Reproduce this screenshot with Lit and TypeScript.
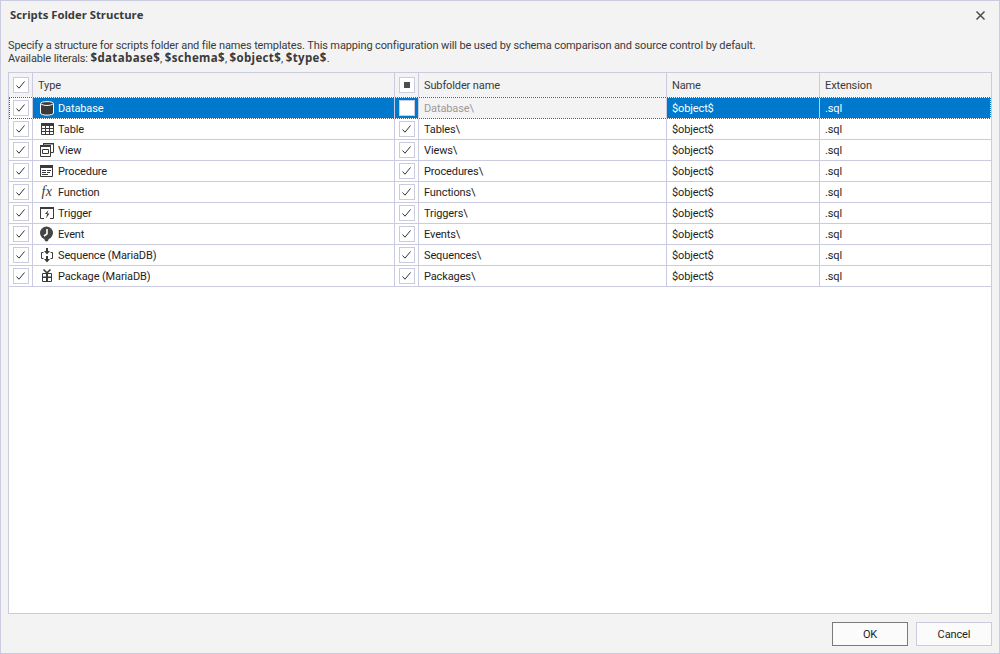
import { LitElement, css, html, svg } from "lit";

const icons: Record<string, unknown> = {
  database: svg`
    <path d="M1.5 3.5C1.5 1 14.5 1 14.5 3.5V13C14.5 15.8 1.5 15.8 1.5 13Z" fill="#3a3a3a" stroke="#fff" stroke-width="1"/>
    <path d="M2 3.8C3.8 6 12.2 6 14 3.8" fill="none" stroke="#fff" stroke-width="1"/>`,
  table: svg`
    <path d="M2.5 2.5h12v11h-12z" fill="#fff" stroke="#3a3a3a"/>
    <path d="M2 2h13v3H2z" fill="#3a3a3a"/>
    <path d="M6.5 5v9M10.5 5v9M3 7.5h12M3 10.5h12" stroke="#3a3a3a" fill="none"/>`,
  view: svg`
    <path d="M4.5 1.5h10v9h-10z" fill="#fff" stroke="#3a3a3a"/>
    <path d="M1.5 3.5h10v11h-10z" fill="#fff" stroke="#3a3a3a"/>
    <path d="M4 1h11v1.5H4zM1 3h11v2H1z" fill="#3a3a3a"/>
    <path d="M3.5 7.5h6v4h-6z" fill="none" stroke="#3a3a3a"/>`,
  procedure: svg`
    <path d="M1.5 2.5h12v11h-12z" fill="#fff" stroke="#3a3a3a"/>
    <path d="M1 2h13v3H1z" fill="#3a3a3a"/>
    <path d="M3 7.5h4M8 7.5h4M3 9.5h4M8 9.5h3M3 11.5h6" stroke="#3a3a3a" fill="none"/>`,
  trigger: svg`
    <path d="M1.5 2.5h13v11h-13z" fill="#fff" stroke="#3a3a3a"/>
    <path d="M1 2h14v2H1z" fill="#3a3a3a"/>
    <path d="M5 13h6v2H5z" fill="#fff"/>
    <path d="M9.5 5 6 9h2.2L7 13.5l3.5-5H8.3Z" fill="#3a3a3a"/>`,
  event: svg`
    <circle cx="7.5" cy="7" r="6.5" fill="#454545"/>
    <path d="M8 3v4.8L5 10" fill="none" stroke="#fff" stroke-width="1.6"/>
    <circle cx="7.5" cy="13.5" r="2" fill="#454545"/>`,
  sequence: svg`
    <path d="M4.5 5.5H2.5v6h2M11.5 5.5h2v6h-2" fill="none" stroke="#3a3a3a"/>
    <path d="M7 1h2v3h2L8 7.5 5 4h2ZM7 9h2v3h2l-3 3.5L5 12h2Z" fill="#3a3a3a"/>`,
  package: svg`
    <path d="M3.5 5.5h9v8h-9z" fill="#fff" stroke="#3a3a3a" stroke-width="1"/>
    <path d="M3 8.5h10v1.5H3zM7 5h2v9H7z" fill="#3a3a3a"/>
    <path d="M4.5 1.5 8 4.8l3.5-3.3" fill="none" stroke="#3a3a3a" stroke-width="1.6"/>`,
};

const rows = [
  { type: "Database", icon: "database", folder: "Database\\" },
  { type: "Table", icon: "table", folder: "Tables\\" },
  { type: "View", icon: "view", folder: "Views\\" },
  { type: "Procedure", icon: "procedure", folder: "Procedures\\" },
  { type: "Function", icon: "fx", folder: "Functions\\" },
  { type: "Trigger", icon: "trigger", folder: "Triggers\\" },
  { type: "Event", icon: "event", folder: "Events\\" },
  { type: "Sequence (MariaDB)", icon: "sequence", folder: "Sequences\\" },
  { type: "Package (MariaDB)", icon: "package", folder: "Packages\\" },
];

class AppRoot extends LitElement {
  static styles = css`
    :host {
      display: block;
      width: 1000px;
      height: 654px;
      font-family: Roboto, "Noto Sans", sans-serif;
      font-size: 11px;
      letter-spacing: -0.12px;
      color: #1e1e1e;
    }

    .dialog {
      box-sizing: border-box;
      width: 1000px;
      height: 654px;
      border: 1px solid #cbcbdf;
      background: #f3f3f3;
      display: flex;
      flex-direction: column;
    }

    .titlebar {
      height: 28px;
      flex: none;
      display: flex;
      align-items: center;
      justify-content: space-between;
      padding: 0 13px 0 9px;
    }

    .title {
      font-family: "Open Sans", sans-serif;
      font-weight: 700;
      font-size: 11.3px;
      letter-spacing: 0;
      color: #3a3a3a;
      margin-top: -2px;
    }

    .close {
      width: 11px;
      height: 11px;
      display: block;
    }

    .desc {
      height: 43px;
      flex: none;
      box-sizing: border-box;
      padding: 10px 0 0 7px;
      line-height: 13px;
      color: #3a3a3a;
    }

    .desc b {
      font-family: "Open Sans", sans-serif;
      font-weight: 700;
      font-size: 11.5px;
      line-height: 1;
      letter-spacing: 0.35px;
    }

    .grid {
      flex: 1;
      margin: 0 7px;
      box-sizing: border-box;
      border: 1px solid #cbcbdf;
      background: #fff;
      min-height: 0;
    }

    .row {
      display: grid;
      grid-template-columns: 24px 362px 24px 248px 153px 171px;
      height: 21px;
      box-sizing: border-box;
      border-bottom: 1px solid #cbcbdf;
      position: relative;
    }

    .row.head {
      height: 25px;
      background: #f3f3f3;
      color: #3a3a3a;
    }

    .cell {
      display: flex;
      align-items: center;
      box-sizing: border-box;
      border-right: 1px solid #cbcbdf;
      padding-left: 5px;
      white-space: nowrap;
      overflow: hidden;
    }

    .cell:last-child {
      border-right: none;
    }

    .cell.check {
      padding-left: 0;
      justify-content: center;
    }

    .cell.type {
      padding-left: 6px;
      gap: 3px;
    }

    .row.selected {
      background: #0078cc;
      color: #fff;
    }

    .row.selected::after {
      content: "";
      position: absolute;
      inset: -1px 0 -1px 0;
      pointer-events: none;
      --h: repeating-linear-gradient(90deg, #0078cc 0 1px, #fff 1px 2px);
      --v: repeating-linear-gradient(0deg, #0078cc 0 1px, #fff 1px 2px);
      background:
        var(--h) top / 100% 1px no-repeat,
        var(--h) bottom / 100% 1px no-repeat,
        var(--v) left / 1px 100% no-repeat,
        var(--v) right / 1px 100% no-repeat;
    }

    .row.selected .first {
      background: #fff;
    }

    .row.selected .muted {
      background: #f3f3f3;
      color: #9a9a9a;
    }

    .box {
      box-sizing: border-box;
      width: 16px;
      height: 16px;
      border: 1px solid #cbcbdf;
      background: #fff;
      display: flex;
      align-items: center;
      justify-content: center;
    }

    .box svg {
      display: block;
      width: 9px;
      height: 8px;
    }

    .box .mixed {
      width: 6px;
      height: 6px;
      background: #4d4d4d;
    }

    .icon {
      width: 16px;
      height: 16px;
      flex: none;
      display: block;
    }

    .fx {
      width: 16px;
      flex: none;
      text-align: center;
      font-family: "Liberation Serif", serif;
      font-style: italic;
      font-size: 14px;
      letter-spacing: 0.5px;
      color: #3a3a3a;
    }

    .footer {
      height: 39px;
      flex: none;
      display: flex;
      justify-content: flex-end;
      align-items: flex-start;
      gap: 8px;
      padding: 8px 7px 0 0;
      box-sizing: border-box;
    }

    button {
      width: 76px;
      height: 24px;
      box-sizing: border-box;
      border: 1px solid #cbcbdf;
      background: #fbfbfb;
      font: inherit;
      letter-spacing: inherit;
      color: #1e1e1e;
      padding: 0;
    }

    button.default {
      border-color: #7a7a7a;
    }
  `;

  private box(state: "on" | "off" | "mixed") {
    return html`<span class="box">
      ${state === "on"
        ? html`<svg viewBox="0 0 9 8">
            <path d="M0.5 4.5 3 7.2 8.5 0.5" fill="none" stroke="#333" stroke-width="1" />
          </svg>`
        : state === "mixed"
          ? html`<span class="mixed"></span>`
          : ""}
    </span>`;
  }

  render() {
    return html`
      <div class="dialog">
        <div class="titlebar">
          <span class="title">Scripts Folder Structure</span>
          <svg class="close" viewBox="0 0 11 11">
            <path d="M1.5 1.5l8 8M9.5 1.5l-8 8" stroke="#4a4a4a" stroke-width="1.5" fill="none" />
          </svg>
        </div>
        <div class="desc">
          Specify a structure for scripts folder and file names templates. This mapping
          configuration will be used by schema comparison and source control by default.<br />
          Available literals: <b>$database$</b>, <b>$schema$</b>, <b>$object$</b>,
          <b>$type$</b>.
        </div>
        <div class="grid">
          <div class="row head">
            <div class="cell check">${this.box("on")}</div>
            <div class="cell">Type</div>
            <div class="cell check">${this.box("mixed")}</div>
            <div class="cell">Subfolder name</div>
            <div class="cell">Name</div>
            <div class="cell">Extension</div>
          </div>
          ${rows.map(
            (r, i) => html`
              <div class="row ${i === 0 ? "selected" : ""}">
                <div class="cell check first">${this.box("on")}</div>
                <div class="cell type">
                  ${r.icon === "fx"
                    ? html`<span class="fx">fx</span>`
                    : html`<svg class="icon" viewBox="0 0 16 16">${icons[r.icon]}</svg>`}
                  ${r.type}
                </div>
                <div class="cell check">${this.box(i === 0 ? "off" : "on")}</div>
                <div class="cell muted">${r.folder}</div>
                <div class="cell">$object$</div>
                <div class="cell">.sql</div>
              </div>
            `,
          )}
        </div>
        <div class="footer">
          <button class="default">OK</button>
          <button>Cancel</button>
        </div>
      </div>
    `;
  }
}

customElements.define("app-root", AppRoot);
